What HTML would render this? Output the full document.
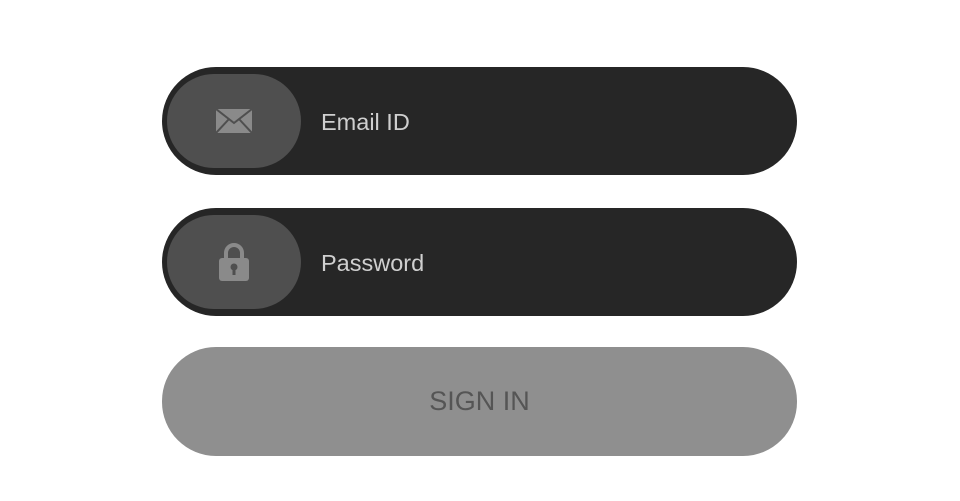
<!DOCTYPE html>
<html><head><style>
body{margin:0;width:960px;height:501px;background:#fff;font-family:"Liberation Sans",sans-serif;position:relative;overflow:hidden}
.bar{position:absolute;left:162px;width:635px;height:108px;border-radius:54px;background:#262626}
.pill{position:absolute;left:5px;top:7px;width:134px;height:94px;border-radius:47px;background:#4f4f4f}
.pill svg{position:absolute;left:50%;top:50%;transform:translate(-50%,-50%)}
.lbl{position:absolute;left:159px;top:1px;line-height:108px;font-size:23.5px;color:#cfcfcf}
.btn{position:absolute;left:162px;top:347px;width:635px;height:109px;border-radius:54px;background:#8f8f8f;color:#555;font-size:27px;text-align:center;line-height:109px}
</style></head><body>
<div class="bar" style="top:67px"><div class="pill"><svg width="36" height="24" viewBox="0 0 36 24"><rect x="0" y="0" width="36" height="24" fill="#8a8a8a"/><path d="M0 0L18 14L36 0" fill="none" stroke="#4f4f4f" stroke-width="2"/><path d="M0 24L13 10M36 24L23 10" stroke="#4f4f4f" stroke-width="2"/></svg></div><div class="lbl">Email ID</div></div>
<div class="bar" style="top:208px"><div class="pill"><svg width="32" height="38" viewBox="0 0 32 38"><path d="M8 16V10a8 8 0 0 1 16 0v6" fill="none" stroke="#8a8a8a" stroke-width="4"/><rect x="1" y="15" width="30" height="23" rx="3" fill="#8a8a8a"/><circle cx="16" cy="24" r="3.5" fill="#4f4f4f"/><rect x="14.5" y="25" width="3" height="7" fill="#4f4f4f"/></svg></div><div class="lbl">Password</div></div>
<div class="btn">SIGN IN</div>
</body></html>
